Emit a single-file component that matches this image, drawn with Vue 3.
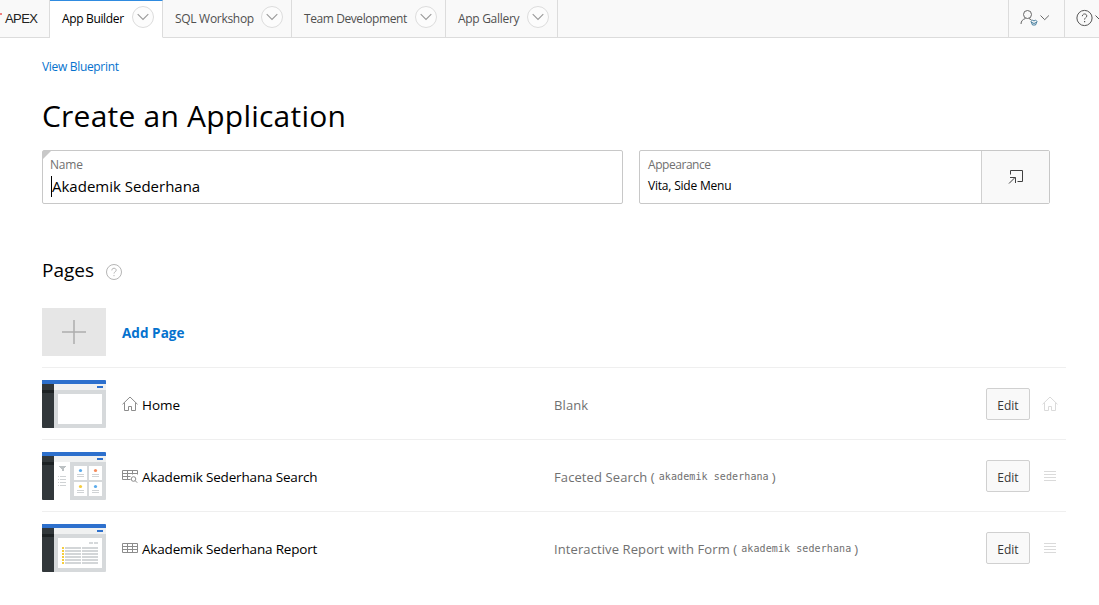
<script setup>
const tabs = [
  { label: 'App Builder', id: 'builder', active: true },
  { label: 'SQL Workshop', id: 'sql' },
  { label: 'Team Development', id: 'team' },
  { label: 'App Gallery', id: 'gallery' },
]
const rows = [
  { name: 'Home', id: 'home', kind: 'Blank' },
  { name: 'Akademik Sederhana Search', id: 'search', kind: 'Faceted Search', source: 'akademik sederhana' },
  { name: 'Akademik Sederhana Report', id: 'report', kind: 'Interactive Report with Form', source: 'akademik sederhana' },
]
const cards = [
  { x: 32, y: 14, c: '#5aabec' },
  { x: 47, y: 14, c: '#f68b5b' },
  { x: 32, y: 30, c: '#f5cd3d' },
  { x: 47, y: 30, c: '#5aabec' },
]
</script>

<template>
  <div class="page">
    <header class="bar">
      <div class="brand"><span class="dot"></span><span class="brand-text">APEX</span></div>
      <div v-for="t in tabs" :key="t.id" class="tab" :class="[t.id, { active: t.active }]">
        <span class="label">{{ t.label }}</span>
        <svg class="drop" width="22" height="22" viewBox="0 0 22 22" fill="none">
          <circle cx="11" cy="11" r="10.5" fill="#fcfcfc" stroke="#dcdcdc" />
          <path d="M5.7 8.2l5.3 5.3 5.3-5.3" stroke="#9a9a9a" stroke-width="1.1" />
        </svg>
      </div>
      <div class="spacer"></div>
      <div class="tool user">
        <svg width="32" height="20" viewBox="0 0 32 20" fill="none" stroke="#666">
          <circle cx="7.500" cy="5.500" r="4" />
          <path d="M1 15c0-3 1.800-4.700 4.500-5.500M9 9.500l2.500 1.500" />
          <path d="M11 12.500l1.500-1.500 1.500 1 1.500-1 1.500 1.500-1.500 3.500h-3zM11 13l3 1.500 3-1.500" stroke="#477f9f" />
          <path d="M20.500 6.500l4.200 4.200 4.200-4.200" />
        </svg>
      </div>
      <div class="tool help">
        <svg width="28" height="18" viewBox="0 0 28 18" fill="none" stroke="#555">
          <circle cx="8.500" cy="9" r="7.600" />
          <path d="M6.300 7.200c0-3 4.500-2.900 4.500-.2 0 1.500-2.200 1.700-2.200 3.600" />
          <path d="M8.600 12v1.300" stroke-width="1.200" />
          <path d="M19.500 6.500l4.200 4.200 4.200-4.200" />
        </svg>
      </div>
    </header>

    <main class="main">
      <a class="blueprint">View Blueprint</a>
      <h1 class="title">Create an Application</h1>
      <div class="fields">
        <div class="field name-field">
          <span class="corner"></span>
          <span class="field-label l-name">Name</span>
          <span class="name-value"><i class="caret"></i>Akademik Sederhana</span>
        </div>
        <div class="field look-field">
          <div class="look-text">
            <span class="field-label l-look">Appearance</span>
            <span class="look-value">Vita, Side Menu</span>
          </div>
          <div class="look-button">
            <svg width="16" height="16" viewBox="0 0 16 16" fill="none" stroke="#404040">
              <path d="M2.500 5.500V1.500h12v11H9.500M1 14.500l6-6M2 8.500h5.500v5.500" />
            </svg>
          </div>
        </div>
      </div>

      <div class="section">
        <h2 class="pages">Pages</h2>
        <svg width="16" height="16" viewBox="0 0 16 16" fill="none" stroke="#b5b5b5">
          <circle cx="8" cy="8" r="7.500" />
          <path d="M5.800 6.400c0-3 4.400-2.800 4.400-.1 0 1.400-2.200 1.600-2.200 3.200M8 11v1.200" />
        </svg>
      </div>

      <div class="row add">
        <div class="plus">
          <svg width="24" height="24" viewBox="0 0 24 24" fill="none" stroke="#adadad" stroke-width="1.500">
            <path d="M12 0v24M0 12h24" />
          </svg>
        </div>
        <a class="add-label">Add Page</a>
      </div>

      <div v-for="r in rows" :key="r.id" class="row" :class="r.id">
        <svg class="thumb" width="64" height="48" viewBox="0 0 64 48" shape-rendering="crispEdges">
          <rect width="64" height="48" fill="#d6d9db" />
          <rect width="64" height="10" fill="#f0f1f1" />
          <rect width="12" height="48" fill="#32383b" />
          <rect y="10" width="12" height="3" fill="#1d2224" />
          <rect width="64" height="4" fill="#2d70cd" />
          <rect x="55" y="6" width="6" height="2" fill="#2d70cd" />
          <rect v-if="r.id !== 'search'" x="16" y="14" width="44" height="30" fill="#fff" />
          <g v-if="r.id === 'search'">
            <rect x="12" y="10" width="16" height="38" fill="#fff" />
            <path d="M17 14h7l-2.500 3v2h-2v-2z" fill="#bdc2c4" />
            <g v-for="n in 4" :key="n" fill="#cfd2d4">
              <rect x="16" :y="21 + n * 3" width="1" height="1" />
              <rect x="18" :y="21 + n * 3" width="6" height="1" />
            </g>
            <g v-for="(c, i) in cards" :key="i">
              <rect :x="c.x" :y="c.y" width="13" height="14" fill="#fff" />
              <circle :cx="c.x + 6.5" :cy="c.y + 4.500" r="1.600" :fill="c.c" shape-rendering="auto" />
              <rect :x="c.x + 3" :y="c.y + 8" width="7" height="1" fill="#d0d3d5" />
              <rect :x="c.x + 3" :y="c.y + 10" width="7" height="1" fill="#d0d3d5" />
            </g>
          </g>
          <g v-if="r.id === 'report'" shape-rendering="auto">
            <path d="M47 18h4v2h-4zM52 18h4v2h-4z" fill="#d6d9db" />
            <g v-for="n in 6" :key="n">
              <rect x="20" :y="20 + n * 3" width="2" height="2" fill="#f5cd3d" />
              <rect x="23" :y="20 + n * 3" width="16" height="2" fill="#d3d6d8" />
              <rect x="40" :y="20 + n * 3" width="16" height="2" fill="#d3d6d8" />
            </g>
          </g>
        </svg>
        <svg class="kind-icon" width="16" height="16" viewBox="0 0 16 16" fill="none" stroke="#8c8c8c">
          <path v-if="r.id === 'home'" d="M.500 8.300L8 1l7.500 7.300M2.500 6.800v7.700H6.500v-4h3v4h4V6.800" />
          <g v-else-if="r.id === 'search'">
            <path d="M8.500 11.500h-8v-9h15v4M.500 5.500h15M.500 8.500h8M5.500 2.500v9M10.500 2.500v4" />
            <circle cx="11.500" cy="11" r="2.300" />
            <path d="M13.200 12.700l2 2" />
          </g>
          <path v-else d="M.500 3.500h15v9H.500zM.500 6.500h15M.500 9.500h15M5.500 3.500v9M10.500 3.500v9" />
        </svg>
        <span class="row-name">{{ r.name }}</span>
        <div class="kind">
          <span class="kind-text">{{ r.kind }}<template v-if="r.source"> (</template></span>
          <code v-if="r.source" class="source">{{ r.source }}</code>
          <span v-if="r.source">)</span>
        </div>
        <button class="edit">Edit</button>
        <svg class="grip" width="16" height="16" viewBox="0 0 16 16" fill="none" stroke="#dadada">
          <path v-if="r.id === 'home'" d="M.500 8.300L8 1l7.500 7.300M2.500 6.800v7.700H6.500v-4h3v4h4V6.800" />
          <path v-else d="M2 3.500h12M2 6.500h12M2 9.500h12M2 12.500h12" />
        </svg>
      </div>
    </main>
  </div>
</template>

<style>
body { background: #fff; }
</style>

<style scoped>
.page {
  width: 1099px;
  height: 605px;
  overflow: hidden;
  background: #fff;
  color: #000;
  font-family: "Open Sans", "Noto Sans", sans-serif;
  white-space: nowrap;
}
.page * { box-sizing: border-box; }
.bar {
  display: flex;
  height: 38px;
  background: #f9f9f9;
}
.bar > div { border-bottom: 1px solid #dcdcdc; }
.brand {
  position: relative;
  width: 50px;
  border-right: 1px solid #dcdcdc;
  padding-left: 5px;
  font: 13px/37px "Liberation Sans", sans-serif;
  color: #222;
}
.brand-text { letter-spacing: -0.6px; }
.dot {
  position: absolute;
  left: 0;
  top: 13px;
  width: 2px;
  height: 2px;
  background: #f08080;
}
.tab {
  display: flex;
  align-items: center;
  justify-content: space-between;
  padding: 0 8px 3px 12px;
  border-right: 1px solid #dcdcdc;
  font-size: 12px;
  color: #505050;
}
.label { padding-top: 3px; }
.bar > .tab.active {
  background: #fff;
  color: #000;
  border-top: 1px solid #2f8be0;
  border-bottom-color: #fff;
  padding-bottom: 4px;
}
.active .label { padding-top: 2px; }
.builder { width: 113px; }
.sql { width: 129px; }
.team { width: 154px; }
.gallery { width: 112px; }
.builder .label { letter-spacing: -0.35px; }
.sql .label { letter-spacing: -0.3px; }
.team .label { letter-spacing: -0.42px; }
.gallery .label { letter-spacing: -0.3px; }
.spacer { flex: 1; }
.tool { border-left: 1px solid #dcdcdc; padding: 9px 0 0 11px; }
.user { width: 56px; }
.help { width: 35px; overflow: hidden; }
.main { padding: 0 33px 0 42px; }
.blueprint {
  display: block;
  margin-top: 20px;
  font-size: 12px;
  line-height: 18px;
  letter-spacing: -0.32px;
  color: #0572ce;
}
.title {
  margin: 20px 0 14px;
  font-size: 30px;
  line-height: 40px;
  font-weight: 400;
  letter-spacing: 0.22px;
}
.fields { display: flex; gap: 16px; }
.field {
  position: relative;
  height: 54px;
  border: 1px solid #c8c8c8;
  border-radius: 2px;
}
.name-field { width: 581px; padding: 6px 8px; display: flex; flex-direction: column; }
.look-field { width: 411px; display: flex; }
.look-text { flex: 1; padding: 6px 8px; display: flex; flex-direction: column; }
.look-button {
  width: 68px;
  border-left: 1px solid #d0d0d0;
  background: #f9f9f9;
  display: flex;
  align-items: center;
  justify-content: center;
}
.corner {
  position: absolute;
  left: 0;
  top: 0;
  border-top: 8px solid #c8c8c8;
  border-right: 8px solid transparent;
}
.field-label {
  font-size: 12px;
  line-height: 16px;
  letter-spacing: -0.45px;
  color: #707070;
  align-self: flex-start;
}
.l-name { margin-left: -1px; letter-spacing: -0.2px; }
.name-value {
  display: flex;
  align-items: center;
  font-size: 15px;
  line-height: 22px;
  margin-top: 2px;
  align-self: flex-start;
}
.caret { width: 1px; height: 21px; background: #000; }
.look-value {
  font-size: 12px;
  line-height: 16px;
  margin-top: 5px;
  letter-spacing: -0.2px;
  align-self: flex-start;
}
.section { display: flex; align-items: center; gap: 12px; height: 30px; margin-top: 52px; }
.pages { margin: -2px 0 0; font-size: 19px; line-height: 28px; font-weight: 400; width: 51.5px; }
.section svg { margin-top: 2px; }
.row {
  display: flex;
  align-items: center;
  width: 1024px;
  height: 72px;
  border-bottom: 1px solid #efefef;
  font-size: 14px;
}
.row.report { border-bottom: 0; height: 71px; }
.row.add { height: 72px; margin-top: 10px; }
.plus {
  width: 64px;
  height: 48px;
  background: #e6e6e6;
  display: flex;
  align-items: center;
  justify-content: center;
}
.add-label { margin: 3px 0 0 16px; font-weight: 700; font-size: 13.500px; letter-spacing: 0.05px; color: #0572ce; }
.thumb { flex: none; border-radius: 1px; margin-top: 1px; }
.kind-icon { margin: 0 4px 0 16px; }
.row-name { width: 412px; padding-top: 2px; font-size: 13.500px; letter-spacing: -0.17px; }
.home .row-name { letter-spacing: 0; }
.kind { display: flex; align-items: center; width: 432px; padding-top: 2px; font-size: 13px; color: #707070; }
.kind-text { letter-spacing: 0.1px; }
.source { font: 10px/14px "DejaVu Sans Mono", monospace; margin: 0 3px 0 4px; letter-spacing: 0.09px; }
.edit {
  width: 44px;
  height: 32px;
  margin: 1px 12px 0 0;
  padding: 2px 0 0;
  border: 1px solid #d0d0d0;
  border-radius: 2px;
  background: #f9f9f9;
  color: #383838;
  font: 12px "Open Sans", sans-serif;
}
</style>
